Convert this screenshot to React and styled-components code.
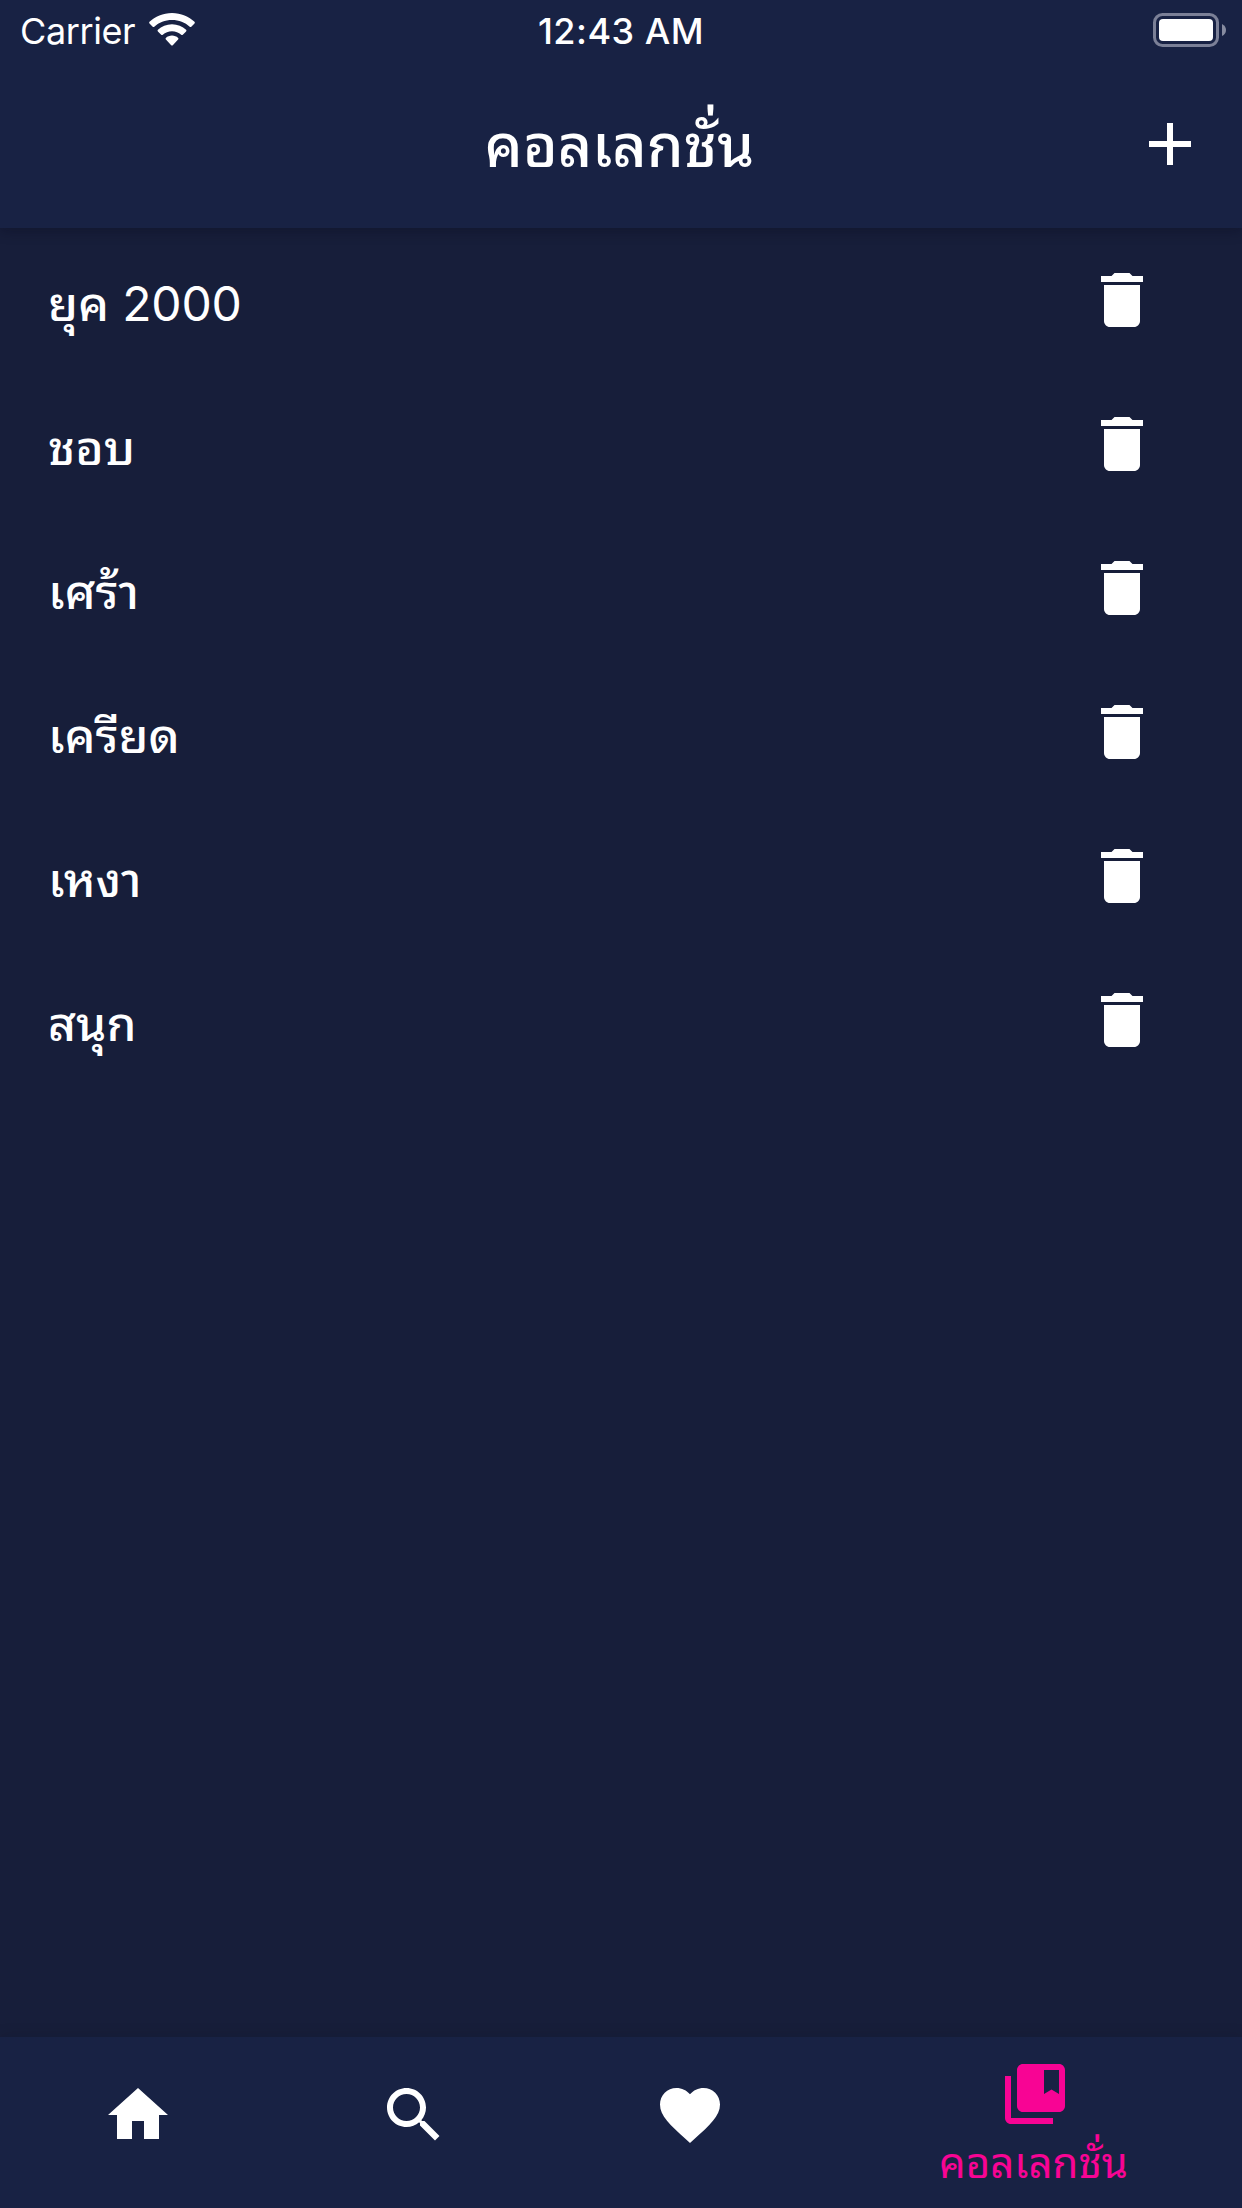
import React from "react";
import styled, { createGlobalStyle } from "styled-components";

const GlobalStyle = createGlobalStyle`
  * { box-sizing: border-box; }
  body { margin: 0; background: #171e3a; }
`;

const Screen = styled.div`
  width: 1242px;
  height: 2208px;
  display: flex;
  flex-direction: column;
  background: #171e3a;
  color: #fff;
  font-family: Inter, Thonburi, "Noto Sans Thai Looped", Loma, Waree, Garuda, "Noto Sans Thai", "Noto Sans", sans-serif;
  overflow: hidden;
`;

const Header = styled.header`
  height: 228px;
  flex: none;
  background: #182244;
  box-shadow: 0 3px 12px rgba(8, 8, 24, 0.3);
`;

const StatusBar = styled.div`
  height: 60px;
  display: grid;
  grid-template-columns: 1fr auto 1fr;
  align-items: center;
  padding: 0 16px 0 20px;
  font-size: 36px;
  line-height: 58px;
`;

const Carrier = styled.div`
  display: flex;
  align-items: center;
  gap: 14px;
  height: 60px;
  letter-spacing: -0.4px;
`;

const StatusText = styled.span`
  padding-top: 2px;
`;

const Time = styled.div`
  font-weight: 500;
  letter-spacing: 0.5px;
  padding: 2px 4px 0 0;
`;

const Battery = styled.div`
  justify-self: end;
  display: flex;
  height: 60px;
  align-items: center;
`;

const Toolbar = styled.div`
  height: 168px;
  display: grid;
  grid-template-columns: 72px 1fr 72px;
  align-items: center;
  padding: 0 36px;
`;

const Title = styled.h1`
  margin: 0;
  padding: 4px 3px 0 0;
  text-align: center;
  font-size: 59px;
  line-height: 80px;
  font-weight: 500;
`;

const IconButton = styled.button`
  display: flex;
  padding: 0;
  border: 0;
  background: none;
  color: inherit;
`;

const List = styled.ul`
  flex: 1;
  margin: 0;
  padding: 0;
  list-style: none;
`;

const Row = styled.li`
  height: 144px;
  display: flex;
  align-items: center;
  justify-content: space-between;
  padding: 0 84px 0 48px;
`;

const Label = styled.span`
  padding-top: 7px;
  font-size: 48px;
  line-height: 72px;
  font-weight: 500;
`;

const Year = styled.span`
  font-weight: 400;
  letter-spacing: -0.2px;
`;

const Nav = styled.nav`
  height: 171px;
  flex: none;
  display: flex;
  background: #182244;
  box-shadow: 0 -3px 12px rgba(8, 8, 24, 0.1);
`;

const Tab = styled.a`
  flex: ${(p) => (p.$active ? "0 0 414px" : "0 0 276px")};
  display: flex;
  flex-direction: column;
  align-items: center;
  padding-top: ${(p) => (p.$active ? "21px" : "42px")};
  color: ${(p) => (p.$active ? "#f80494" : "#fff")};
`;

const TabLabel = styled.span`
  padding: 3px 3px 0 0;
  font-size: 42px;
  line-height: 60px;
`;

const Glyph = styled.svg`
  width: 72px;
  height: 72px;
  display: block;
  flex: none;
  fill: currentColor;
`;

const icons = {
  add: "M19 13h-6v6h-2v-6H5v-2h6V5h2v6h6v2z",
  trash:
    "M6 19c0 1.1.9 2 2 2h8c1.1 0 2-.9 2-2V7H6v12zM19 4h-3.5l-1-1h-5l-1 1H5v2h14V4z",
  home: "M10 20v-6h4v6h5v-8h3L12 3 2 12h3v8z",
  search:
    "M15.5 14h-.79l-.28-.27C15.41 12.59 16 11.11 16 9.5 16 5.91 13.09 3 9.5 3S3 5.91 3 9.5 5.91 16 9.5 16c1.61 0 3.09-.59 4.23-1.57l.27.28v.79l5 4.99L20.49 19l-4.99-5zm-6 0C7.01 14 5 11.99 5 9.5S7.01 5 9.5 5 14 7.01 14 9.5 11.99 14 9.5 14z",
  heart:
    "M12 21.35l-1.45-1.32C5.4 15.36 2 12.28 2 8.5 2 5.42 4.42 3 7.5 3c1.74 0 3.41.81 4.5 2.09C13.09 3.81 14.76 3 16.5 3 19.58 3 22 5.42 22 8.5c0 3.78-3.4 6.86-8.55 11.54L12 21.35z",
  collections:
    "M4 6H2v14c0 1.1.9 2 2 2h14v-2H4V6zM20 2H8c-1.1 0-2 .9-2 2v12c0 1.1.9 2 2 2h12c1.1 0 2-.9 2-2V4c0-1.1-.9-2-2-2zm0 10l-2.5-1.5L15 12V4h5v8z",
};

const Icon = ({ name }) => (
  <Glyph viewBox="0 0 24 24">
    <path d={icons[name]} />
  </Glyph>
);

const WifiIcon = () => (
  <svg width="46" height="34" viewBox="0 0 46 34" fill="#fff">
    <path d="M23 0C14 0 6 3.600 .5 8.800Q-.2 9.600 .5 10.400L3.700 13.700Q4.500 14.400 5.300 13.700C10 9.400 16 7 23 7S36 9.400 40.700 13.700Q41.500 14.400 42.300 13.700L45.500 10.400Q46.200 9.600 45.500 8.800C40 3.600 32 0 23 0Z" />
    <path d="M23 11.300C17.500 11.300 12.600 13.400 8.900 16.800Q8.100 17.600 8.900 18.400L12.200 21.700Q13 22.400 13.800 21.700C16.300 19.500 19.500 18.200 23 18.200S29.700 19.500 32.200 21.700Q33 22.400 33.800 21.700L37.100 18.400Q37.900 17.600 37.100 16.800C33.400 13.400 28.500 11.300 23 11.300Z" />
    <path d="M23 22.600C20.600 22.600 18.500 23.500 16.900 24.900Q16 25.700 16.900 26.600L22.200 32.200Q23 33 23.800 32.200L29.100 26.600Q30 25.700 29.100 24.900C27.500 23.500 25.400 22.600 23 22.600Z" />
  </svg>
);

const BatteryIcon = () => (
  <svg width="73" height="34" viewBox="0 0 73 34">
    <rect x="1.500" y="1.500" width="63" height="31" rx="8" fill="none" stroke="#7b8097" strokeWidth="3" />
    <rect x="6" y="6" width="54" height="22" rx="4" fill="#fff" />
    <path d="M69 11Q73 13 73 17T69 23Z" fill="#868ba0" />
  </svg>
);

const collections = [
  { name: "ยุค", year: "2000" },
  { name: "ชอบ" },
  { name: "เศร้า" },
  { name: "เครียด" },
  { name: "เหงา" },
  { name: "สนุก" },
];

export default function App() {
  return (
    <Screen>
      <GlobalStyle />
      <Header>
        <StatusBar>
          <Carrier>
            <StatusText>Carrier</StatusText>
            <WifiIcon />
          </Carrier>
          <Time>12:43 AM</Time>
          <Battery>
            <BatteryIcon />
          </Battery>
        </StatusBar>
        <Toolbar>
          <span />
          <Title>คอลเลกชั่น</Title>
          <IconButton aria-label="add">
            <Icon name="add" />
          </IconButton>
        </Toolbar>
      </Header>
      <List>
        {collections.map(({ name, year }) => (
          <Row key={name}>
            <Label>
              {name}
              {year && <Year> {year}</Year>}
            </Label>
            <IconButton aria-label="delete">
              <Icon name="trash" />
            </IconButton>
          </Row>
        ))}
      </List>
      <Nav>
        <Tab>
          <Icon name="home" />
        </Tab>
        <Tab>
          <Icon name="search" />
        </Tab>
        <Tab>
          <Icon name="heart" />
        </Tab>
        <Tab $active>
          <Icon name="collections" />
          <TabLabel>คอลเลกชั่น</TabLabel>
        </Tab>
      </Nav>
    </Screen>
  );
}
